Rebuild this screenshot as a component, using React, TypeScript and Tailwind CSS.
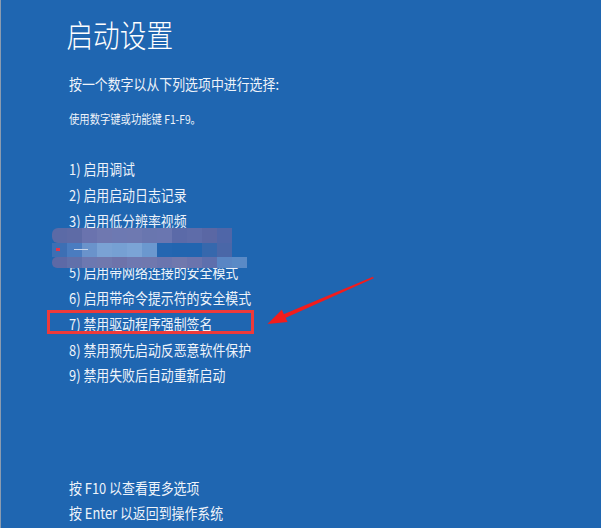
import React from "react";

const row1 = ["#5b6aa6", "#5e6ba6", "#6a73ae", "#6f78b0", "#6d79b2", "#6e79b1", "#6976af", "#6a76b0", "#5b6aa8", "#5e6ca9", "#5a67a4", "#4f66a8"];
const row2 = ["#3d6fb4", "#4a7cc0", "#6a93cb", "#7aa2d4", "#76a0d3", "#7ba4d6", "#6b98cf", "#2466b1", "#2265b0", "#2265b0", "#3668ad", "#4a67a8"];
const row3 = ["#5d69a6", "#6170aa", "#6d78b0", "#7078ad", "#6e73aa", "#6f78b0", "#7078ae", "#6b75ae", "#7078ad", "#6b74ad", "#5e6fad", "#5a86c4", "#5a8ac6"];

const items = [
  "1) 启用调试",
  "2) 启用启动日志记录",
  "3) 启用低分辨率视频",
  "4) 启用安全模式",
  "5) 启用带网络连接的安全模式",
  "6) 启用带命令提示符的安全模式",
  "7) 禁用驱动程序强制签名",
  "8) 禁用预先启动反恶意软件保护",
  "9) 禁用失败后自动重新启动",
];

export default function App() {
  return (
    <div
      className="relative w-[601px] h-[528px] overflow-hidden bg-[#1f66b1] border-l border-[#8a9bb0] text-[#eef3fa]"
      style={{ fontFamily: '"Noto Sans CJK SC", "Noto Sans", sans-serif' }}
    >
      <div className="pl-[68px]">
        <div className="origin-top-left scale-x-[0.86]">
          <h1 className="mt-[16px] -ml-[3px] text-[31px] leading-[36px] font-light text-white">启动设置</h1>
          <p className="mt-[22px] text-[15px] leading-[20px]">按一个数字以从下列选项中进行选择:</p>
          <p className="mt-[17px] text-[12px] leading-[16px]">使用数字键或功能键 F1-F9。</p>
          <ul className="mt-[29px]">
            {items.map((t) => (
              <li key={t} className="text-[15px] leading-[25.8px] whitespace-nowrap">
                {t}
              </li>
            ))}
          </ul>
          <div className="mt-[87px]">
            <p className="text-[15px] leading-[25px]">按 F10 以查看更多选项</p>
            <p className="text-[15px] leading-[25px]">按 Enter 以返回到操作系统</p>
          </div>
        </div>
      </div>

      {/* red underline annotation */}
      <div className="absolute left-[145px] top-[228px] w-[18px] h-[2px] bg-[#e8334a] rounded-full" />

      {/* mosaic */}
      <div className="absolute left-[51px] top-[228px] flex flex-col">
        <div className="flex h-[15px]">
          {row1.map((c, i) => (
            <div key={i} className={i === 0 ? "w-[15px] rounded-l-[6px]" : "w-[15px]"} style={{ background: c }} />
          ))}
        </div>
        <div className="flex h-[14px] relative">
          {row2.map((c, i) => (
            <div key={i} className="w-[15px]" style={{ background: c }} />
          ))}
          <div className="absolute left-[4px] top-[5px] w-[4px] h-[3px] bg-[#e8334a]" />
          <div className="absolute left-[22px] top-[6px] w-[14px] h-[1px] bg-[#c9d6ea]" />
        </div>
        <div className="flex h-[11px]">
          {row3.map((c, i) => (
            <div key={i} className={i === 0 ? "w-[15px] rounded-l-[5px]" : "w-[15px]"} style={{ background: c }} />
          ))}
        </div>
      </div>

      {/* red highlight box */}
      <div className="absolute left-[46px] top-[310px] w-[207px] h-[24px] border-[3px] border-[#ee3a3a]" />

      {/* arrow */}
      <svg className="absolute left-0 top-0" width="601" height="528" viewBox="0 0 601 528">
        <polygon points="372,276.8 372.7,278.3 284.3,318 282.7,314.2" fill="#f21c1c" />
        <polygon points="266.5,324 280.8,309.8 286.6,322" fill="#f21c1c" />
      </svg>
    </div>
  );
}
